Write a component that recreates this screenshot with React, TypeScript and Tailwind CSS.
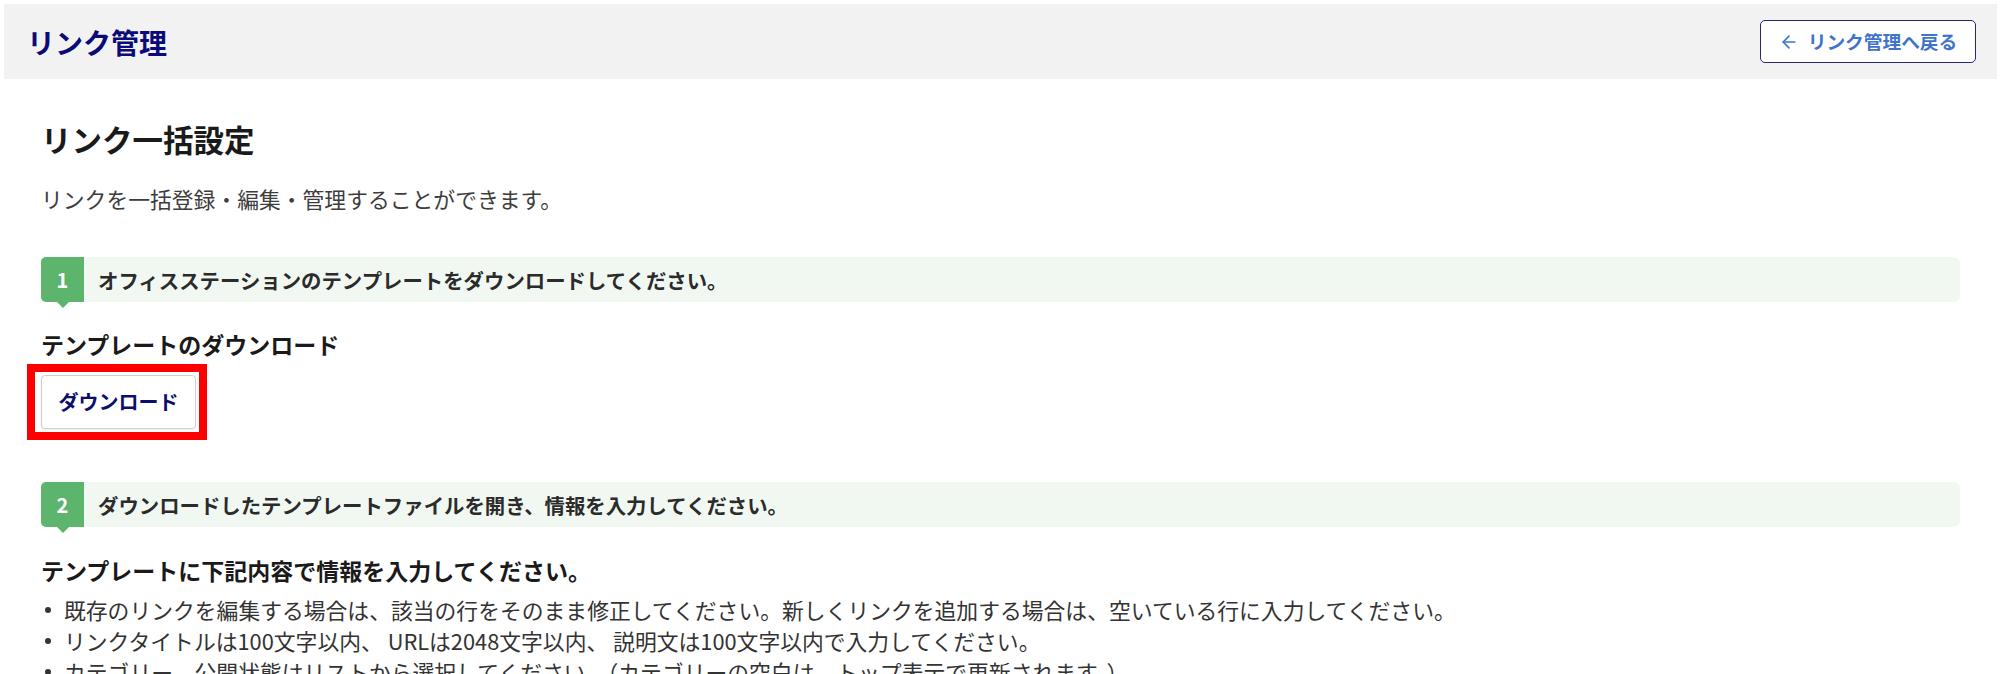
import React from "react";
import { ArrowLeft } from "lucide-react";

function StepBar({ num, text }: { num: string; text: string }) {
  return (
    <div className="flex h-[45px] items-center rounded-[6px] bg-[#f1f8f2]">
      <div className="relative flex h-full w-[43px] items-center justify-center rounded-l-[5px] bg-[#5db56d] text-[20px] font-bold leading-none text-white">
        {num}
        <span className="absolute left-1/2 top-full -translate-x-1/2 border-x-[6px] border-t-[6px] border-x-transparent border-t-[#5db56d]" />
      </div>
      <p className="ml-[14px] text-[20.4px] font-bold leading-none text-[#2b2b2b]">{text}</p>
    </div>
  );
}

const bullets = [
  "既存のリンクを編集する場合は、該当の行をそのまま修正してください。新しくリンクを追加する場合は、空いている行に入力してください。",
  "リンクタイトルは100文字以内、 URLは2048文字以内、 説明文は100文字以内で入力してください。",
  "カテゴリー、公開状態はリストから選択してください。（カテゴリーの空白は、トップ表示で更新されます。）",
];

export default function App() {
  return (
    <div className="min-h-screen bg-white pt-[4px] font-['Noto_Sans_CJK_JP',sans-serif]">
      <header className="ml-[4px] mr-[3px] flex h-[75px] items-center justify-between bg-[#f2f2f2] pl-[23px] pr-[21px]">
        <h1 className="text-[28px] font-bold leading-none text-[#0a0a78]">リンク管理</h1>
        <button className="flex h-[43px] w-[216px] items-center justify-center gap-[9px] rounded-[5px] border-[1.5px] border-[#26267f] bg-white text-[18.7px] font-bold leading-none text-[#3f74c9]">
          <ArrowLeft size={20} strokeWidth={2} />
          <span>リンク管理へ戻る</span>
        </button>
      </header>

      <main className="pl-[41px] pr-[40px]">
        <h2 className="mt-[45px] text-[30.5px] font-bold leading-none text-[#1a1a1a]">リンク一括設定</h2>
        <p className="mt-[33px] text-[21.8px] leading-none text-[#3d3d3d]">
          リンクを一括登録・編集・管理することができます。
        </p>

        <div className="mt-[48px]">
          <StepBar num="1" text="オフィスステーションのテンプレートをダウンロードしてください。" />
        </div>
        <h3 className="mt-[31px] text-[23px] font-bold leading-none text-[#1a1a1a]">テンプレートのダウンロード</h3>
        <div className="-ml-[14px] mt-[8px] inline-block border-[8px] border-[#ff0000] py-[3px] pl-[6px] pr-[3px]">
          <button className="flex h-[54px] w-[155px] items-center justify-center rounded-[4px] border border-[#cfcfcf] bg-white text-[20px] font-bold leading-none text-[#0d0d6e] shadow-[0_1px_2px_rgba(0,0,0,0.08)]">
            ダウンロード
          </button>
        </div>

        <div className="mt-[42px]">
          <StepBar num="2" text="ダウンロードしたテンプレートファイルを開き、情報を入力してください。" />
        </div>
        <h3 className="mt-[32px] text-[23px] font-bold leading-none text-[#1a1a1a]">
          テンプレートに下記内容で情報を入力してください。
        </h3>
        <ul className="mt-[12px]">
          {bullets.map((b) => (
            <li key={b} className="flex items-center text-[21.8px] leading-[31px] text-[#333]">
              <span className="ml-[4px] mr-[13px] h-[6px] w-[6px] shrink-0 rounded-full bg-[#333]" />
              <span>{b}</span>
            </li>
          ))}
        </ul>
      </main>
    </div>
  );
}
